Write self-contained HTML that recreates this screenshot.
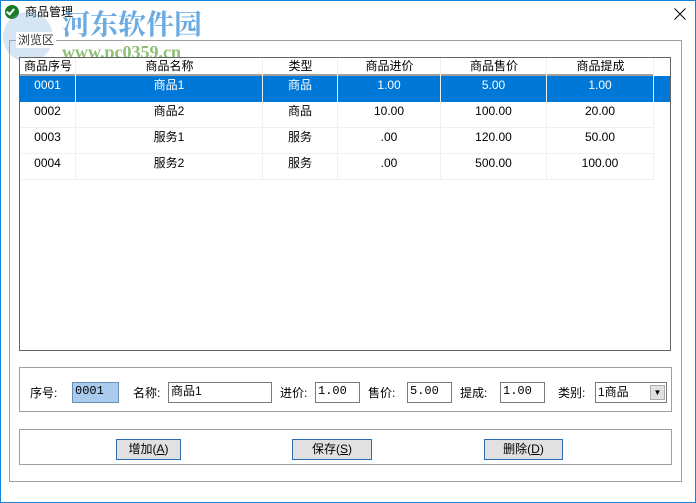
<!DOCTYPE html>
<html><head><meta charset="utf-8"><style>
*{margin:0;padding:0;box-sizing:border-box}
body{width:696px;height:503px;position:relative;background:#fff;font-family:"Liberation Sans","Noto Sans CJK SC",sans-serif;font-size:12px;color:#000;overflow:hidden}
.a{position:absolute}
.win{left:0;top:0;width:696px;height:503px;border:1px solid #1883d7}
.grp{border:1px solid #a0a0a0}
.cell{position:absolute;text-align:center;line-height:17px;height:17px}
.row{position:absolute;left:20px;width:634px;height:26px;border-bottom:1px solid #f0f0f0}
.row span{position:absolute;top:0;line-height:18px;text-align:center}
.vl{position:absolute;top:58px;width:1px;height:122px;background:#f0f0f0}
.box{position:absolute;border:1px solid #7a7a7a;height:21px;line-height:17px;padding-left:2px;font-family:"Liberation Mono","Noto Sans CJK SC",monospace;font-size:12px}
.lbl{position:absolute;top:385px;line-height:16px}
.btn{position:absolute;top:439px;height:21px;border:1px solid #2f6db0;background:#e1e1e1;text-align:center;line-height:19px}
</style></head><body>
<div class="a win"></div>
<div class="a" style="left:5px;top:5px;width:14px;height:14px;border-radius:50%;background:#1a7a2a"></div>
<div class="a" style="left:8px;top:7px;width:5px;height:8px;border-right:2px solid #fff;border-bottom:2px solid #fff;transform:rotate(40deg)"></div>
<div class="a" style="left:25px;top:3px;line-height:18px">商品管理</div>
<svg class="a" style="left:674px;top:8px" width="12" height="12"><path d="M0.5 0.5L11.5 11.5M11.5 0.5L0.5 11.5" stroke="#000" stroke-width="1"/></svg>
<div class="a" style="left:3px;top:12px;width:50px;height:50px;border-radius:50%;background:rgba(120,170,220,.3)"></div>
<div class="a" style="left:62px;top:6px;font-size:28px;line-height:34px;font-weight:bold;color:rgba(70,150,220,.8);font-family:'Noto Serif CJK SC',serif">河东软件园</div>
<div class="a" style="left:62px;top:42px;font-size:18px;line-height:20px;font-weight:bold;color:rgba(120,180,90,.85);font-family:'Liberation Serif',serif">www.pc0359.cn</div>
<div class="a grp" style="left:9px;top:40px;width:673px;height:442px"></div>
<div class="a" style="left:16px;top:32px;background:#fff;padding:0 2px;line-height:16px;color:#333">浏览区</div>
<div class="a" style="left:19px;top:57px;width:652px;height:294px;border:1px solid #646464;background:#fff"></div>
<div class="a" style="left:20px;top:58px;width:634px;height:18px;border-bottom:2px solid #a0a0a0;background:#fff"></div>
<div class="cell" style="left:20px;top:58px;width:56px">商品序号</div>
<div class="cell" style="left:76px;top:58px;width:187px">商品名称</div>
<div class="cell" style="left:263px;top:58px;width:75px">类型</div>
<div class="cell" style="left:338px;top:58px;width:103px">商品进价</div>
<div class="cell" style="left:441px;top:58px;width:106px">商品售价</div>
<div class="cell" style="left:547px;top:58px;width:107px">商品提成</div>
<div class="a" style="left:20px;top:76px;width:650px;height:26px;background:#0078d7"></div>
<div class="vl" style="left:75px"></div><div class="vl" style="left:262px"></div><div class="vl" style="left:337px"></div><div class="vl" style="left:440px"></div><div class="vl" style="left:546px"></div><div class="vl" style="left:653px"></div>
<div class="row" style="top:76px;color:#fff;border-bottom:none"><span style="left:0;width:55px">0001</span><span style="left:56px;width:186px">商品1</span><span style="left:243px;width:74px">商品</span><span style="left:318px;width:102px">1.00</span><span style="left:421px;width:105px">5.00</span><span style="left:527px;width:106px">1.00</span></div>
<div class="row" style="top:102px"><span style="left:0;width:55px">0002</span><span style="left:56px;width:186px">商品2</span><span style="left:243px;width:74px">商品</span><span style="left:318px;width:102px">10.00</span><span style="left:421px;width:105px">100.00</span><span style="left:527px;width:106px">20.00</span></div>
<div class="row" style="top:128px"><span style="left:0;width:55px">0003</span><span style="left:56px;width:186px">服务1</span><span style="left:243px;width:74px">服务</span><span style="left:318px;width:102px">.00</span><span style="left:421px;width:105px">120.00</span><span style="left:527px;width:106px">50.00</span></div>
<div class="row" style="top:154px"><span style="left:0;width:55px">0004</span><span style="left:56px;width:186px">服务2</span><span style="left:243px;width:74px">服务</span><span style="left:318px;width:102px">.00</span><span style="left:421px;width:105px">500.00</span><span style="left:527px;width:106px">100.00</span></div>
<div class="a grp" style="left:19px;top:367px;width:653px;height:45px"></div>
<div class="lbl" style="left:30px">序号:</div>
<div class="box" style="left:72px;top:382px;width:47px;background:#a9cbee;border-color:#6a8fb5">0001</div>
<div class="lbl" style="left:133px">名称:</div>
<div class="box" style="left:168px;top:382px;width:104px;font-family:'Liberation Sans','Noto Sans CJK SC',sans-serif">商品1</div>
<div class="lbl" style="left:280px">进价:</div>
<div class="box" style="left:315px;top:382px;width:45px">1.00</div>
<div class="lbl" style="left:368px">售价:</div>
<div class="box" style="left:407px;top:382px;width:45px">5.00</div>
<div class="lbl" style="left:460px">提成:</div>
<div class="box" style="left:500px;top:382px;width:45px">1.00</div>
<div class="lbl" style="left:558px">类别:</div>
<div class="box" style="left:595px;top:382px;width:72px;font-family:'Liberation Sans','Noto Sans CJK SC',sans-serif;line-height:19px">1商品</div>
<div class="a" style="left:650px;top:385px;width:15px;height:15px;background:#e1e1e1;border:1px solid #adadad;font-size:8px;text-align:center;line-height:14px">▼</div>
<div class="a grp" style="left:19px;top:429px;width:653px;height:36px"></div>
<div class="btn" style="left:116px;width:65px">增加(<u>A</u>)</div>
<div class="btn" style="left:292px;width:80px">保存(<u>S</u>)</div>
<div class="btn" style="left:484px;width:79px">删除(<u>D</u>)</div>
</body></html>
